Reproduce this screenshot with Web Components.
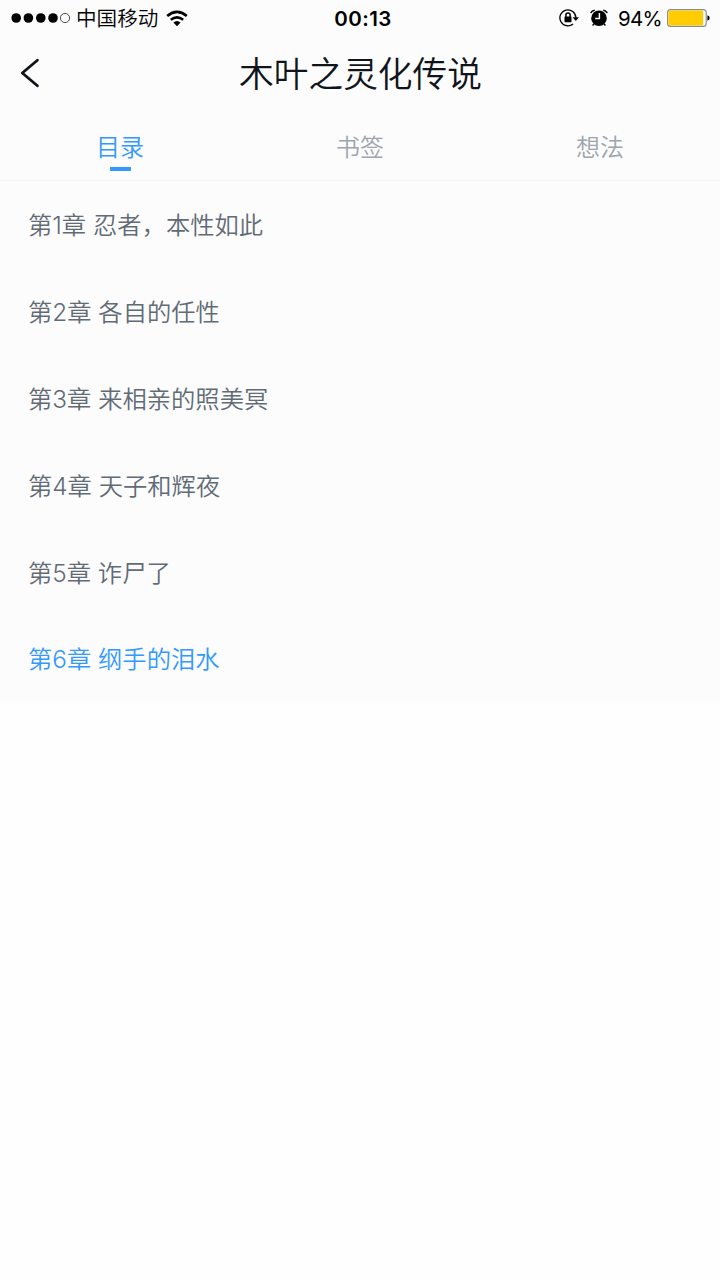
<!DOCTYPE html>
<html lang="zh-CN">
<head>
<meta charset="utf-8">
<meta name="viewport" content="width=device-width, initial-scale=1">
<title>木叶之灵化传说</title>
<style>
  body {
    margin: 0;
    background: #fefefe;
    font-family: Inter, "Noto Sans CJK SC", sans-serif;
    font-weight: 350;
    color: #10151b;
  }
</style>
</head>
<body>
<book-contents>
  <status-bar carrier="中国移动" time="00:13" battery="94"></status-bar>
  <nav-header>木叶之灵化传说</nav-header>
  <tab-bar>
    <tab-item active>目录</tab-item>
    <tab-item>书签</tab-item>
    <tab-item>想法</tab-item>
  </tab-bar>
  <chapter-list>
    <chapter-row>第1章 忍者，本性如此</chapter-row>
    <chapter-row>第2章 各自的任性</chapter-row>
    <chapter-row>第3章 来相亲的照美冥</chapter-row>
    <chapter-row>第4章 天子和辉夜</chapter-row>
    <chapter-row>第5章 诈尸了</chapter-row>
    <chapter-row current>第6章 纲手的泪水</chapter-row>
  </chapter-list>
</book-contents>

<script>
class BookContents extends HTMLElement {
  constructor() {
    super();
    this.attachShadow({ mode: 'open' }).innerHTML = `
      <style>
        :host { display: flex; flex-direction: column; background: #fcfcfd; }
      </style>
      <slot></slot>`;
  }
}

class StatusBar extends HTMLElement {
  constructor() {
    super();
    this.attachShadow({ mode: 'open' });
  }

  connectedCallback() {
    const carrier = this.getAttribute('carrier');
    const time = this.getAttribute('time');
    const battery = this.getAttribute('battery');
    this.shadowRoot.innerHTML = `
      <style>
        :host {
          display: grid;
          grid-template-columns: 1fr auto 1fr;
          grid-template-rows: 36px;
          height: 36px;
          padding: 0 10px 0 11px;
          color: #000;
          line-height: 34px;
          white-space: nowrap;
        }
        svg { display: block; flex: none; }
        span { padding-top: 2px; }
        .left, .right { display: flex; align-items: center; height: 36px; }
        .right { justify-content: flex-end; }
        .carrier { margin: 0 8px 0 6px; font-size: 20.6px; }
        .time { padding-left: 5px; font-size: 20.5px; font-weight: 600; letter-spacing: .4px; }
        .percent { margin: 0 5px 0 10px; font-size: 20.5px; font-weight: 400; letter-spacing: -.7px; }
        .alarm { margin-left: 11px; }
      </style>
      <div class="left">
        <svg width="59" height="12" viewBox="0 0 59 12">
          <circle cx="5.2" cy="6" r="4.8"/>
          <circle cx="17.4" cy="6" r="4.8"/>
          <circle cx="29.8" cy="6" r="4.8"/>
          <circle cx="42" cy="6" r="4.8"/>
          <circle cx="54" cy="6" r="4.6" fill="none" stroke="#222" stroke-width=".8"/>
        </svg>
        <span class="carrier">${carrier}</span>
        <svg width="22" height="17" viewBox="0 0 22 17" fill="none" stroke="#000" stroke-width="2.6">
          <path d="M1.2 5.9Q11-2 20.8 5.9"/>
          <path d="M4.8 9.8Q11 5 17.2 9.8"/>
          <path d="M7.4 12.6Q11 9.6 14.6 12.6L11 16.2Z" fill="#000" stroke="none"/>
        </svg>
      </div>
      <span class="time">${time}</span>
      <div class="right">
        <svg width="20" height="18" viewBox="0 0 20 18">
          <path d="M14.1 14.9A8 8 0 1 1 16.9 8.6" fill="none" stroke="#000" stroke-width="1.3"/>
          <path d="M13.6 8.2H20L16.8 11.9Z"/>
          <path d="M6.9 8V6.1a2.1 2.1 0 0 1 4.2 0V8" fill="none" stroke="#000" stroke-width="1.5"/>
          <rect x="5.5" y="7.5" width="7" height="5.7" rx=".6"/>
        </svg>
        <svg class="alarm" width="18" height="18" viewBox="0 0 18 18">
          <circle cx="9" cy="9.2" r="7.8"/>
          <path d="M.9 4.1Q1.6 1.7 4.8 1.2M17.1 4.1Q16.4 1.7 13.2 1.2M4 15 2.6 16.6M14 15l1.4 1.6" fill="none" stroke="#000" stroke-width="1.5"/>
          <path d="M9.4 4V9.6H5.2" fill="none" stroke="#fff" stroke-width="1.5"/>
        </svg>
        <span class="percent">${battery}%</span>
        <svg width="43" height="18" viewBox="0 0 43 18">
          <rect x=".6" y=".6" width="38.6" height="16.8" rx="3" fill="#fff" stroke="#888" stroke-width="1.1"/>
          <rect x="1.4" y="1.4" width="${37 * battery / 100}" height="15.2" rx="1.7" fill="#fc0"/>
          <path d="M40.4 6.2Q42.7 6.8 42.7 9T40.4 11.8Z"/>
        </svg>
      </div>`;
  }
}

class NavHeader extends HTMLElement {
  constructor() {
    super();
    this.attachShadow({ mode: 'open' }).innerHTML = `
      <style>
        :host {
          display: grid;
          grid-template-columns: 60px 1fr 60px;
          align-items: center;
          height: 76px;
        }
        svg { display: block; margin: 0 0 2px 19px; }
        h1 {
          margin: 0;
          padding-left: 1px;
          text-align: center;
          font-size: 34.7px;
          font-weight: inherit;
          line-height: 76px;
        }
      </style>
      <svg width="22" height="32" viewBox="0 0 22 32" fill="none" stroke="#10151b" stroke-width="2.8" stroke-linecap="round" stroke-linejoin="round">
        <path d="M18.4 3.2 3.3 16 18.4 28.8"/>
      </svg>
      <h1><slot></slot></h1>`;
  }
}

class TabBar extends HTMLElement {
  constructor() {
    super();
    this.attachShadow({ mode: 'open' }).innerHTML = `
      <style>
        :host {
          display: grid;
          grid-template-columns: repeat(3, 1fr);
          box-sizing: border-box;
          height: 69px;
          border-bottom: 1px solid #f3f5f8;
        }
      </style>
      <slot></slot>`;
  }
}

class TabItem extends HTMLElement {
  constructor() {
    super();
    this.attachShadow({ mode: 'open' }).innerHTML = `
      <style>
        :host {
          display: flex;
          flex-direction: column;
          align-items: center;
          padding-top: 18px;
          color: #9ca5ae;
          font-size: 24px;
          line-height: 36px;
        }
        :host([active]) { color: #3399ff; }
        :host([active])::after {
          content: "";
          width: 21px;
          height: 4px;
          margin-top: 1px;
          background: #3399ff;
        }
      </style>
      <span><slot></slot></span>`;
  }
}

class ChapterList extends HTMLElement {
  constructor() {
    super();
    this.attachShadow({ mode: 'open' }).innerHTML = `
      <style>
        :host { display: flex; flex-direction: column; }
      </style>
      <slot></slot>`;
  }
}

class ChapterRow extends HTMLElement {
  constructor() {
    super();
    this.attachShadow({ mode: 'open' }).innerHTML = `
      <style>
        :host {
          display: block;
          height: 86.9px;
          padding: 0 28px;
          color: #616b75;
          font-size: 24.3px;
          line-height: 88.6px;
          white-space: nowrap;
        }
        :host([current]) { color: #3399ff; }
      </style>
      <slot></slot>`;
  }
}

customElements.define('book-contents', BookContents);
customElements.define('status-bar', StatusBar);
customElements.define('nav-header', NavHeader);
customElements.define('tab-bar', TabBar);
customElements.define('tab-item', TabItem);
customElements.define('chapter-list', ChapterList);
customElements.define('chapter-row', ChapterRow);
</script>
</body>
</html>
